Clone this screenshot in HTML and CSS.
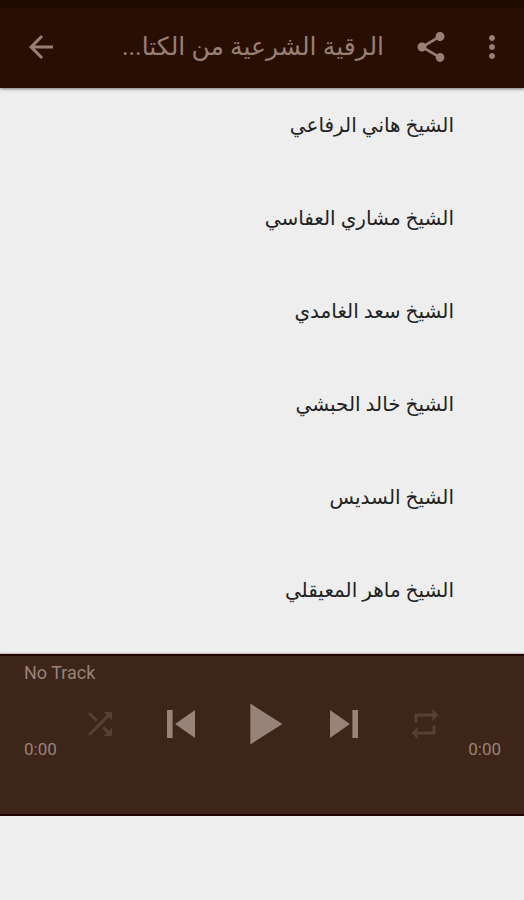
FILE: index.html
```html
<!DOCTYPE html>
<html lang="ar" dir="rtl">
<head>
<meta charset="UTF-8">
<meta name="viewport" content="width=device-width, initial-scale=1.0">
<title>الرقية الشرعية</title>
<link rel="stylesheet" href="styles.css">
</head>
<body>
<div class="status-bar"></div>
<header class="toolbar">
    <button class="icon-btn" aria-label="المزيد">
        <svg class="icon" viewBox="0 0 24 24"><path d="M12 8c1.1 0 2-.9 2-2s-.9-2-2-2-2 .9-2 2 .9 2 2 2zm0 2c-1.1 0-2 .9-2 2s.9 2 2 2 2-.9 2-2-.9-2-2-2zm0 6c-1.1 0-2 .9-2 2s.9 2 2 2 2-.9 2-2-.9-2-2-2z"/></svg>
    </button>
    <button class="icon-btn share" aria-label="مشاركة">
        <svg class="icon" viewBox="0 0 24 24"><path d="M18 16.08c-.76 0-1.44.3-1.96.77L8.91 12.7c.05-.23.09-.46.09-.7s-.04-.47-.09-.7l7.05-4.11c.54.5 1.25.81 2.04.81 1.66 0 3-1.34 3-3s-1.34-3-3-3-3 1.34-3 3c0 .24.04.47.09.7L8.04 9.81C7.5 9.31 6.79 9 6 9c-1.66 0-3 1.34-3 3s1.34 3 3 3c.79 0 1.5-.31 2.04-.81l7.12 4.16c-.05.21-.08.43-.08.65 0 1.61 1.31 2.92 2.92 2.92s2.92-1.31 2.92-2.92-1.31-2.92-2.92-2.92z"/></svg>
    </button>
    <h1 class="title">الرقية الشرعية من الكتا...</h1>
    <button class="icon-btn" aria-label="رجوع">
        <svg class="icon" viewBox="0 0 24 24"><path d="M20 11H7.83l5.59-5.59L12 4l-8 8 8 8 1.41-1.41L7.83 13H20v-2z"/></svg>
    </button>
</header>

<ul class="tracks">
    <li><a href="#">الشيخ هاني الرفاعي</a></li>
    <li><a href="#">الشيخ مشاري العفاسي</a></li>
    <li><a href="#">الشيخ سعد الغامدي</a></li>
    <li><a href="#">الشيخ خالد الحبشي</a></li>
    <li><a href="#">الشيخ السديس</a></li>
    <li><a href="#">الشيخ ماهر المعيقلي</a></li>
</ul>

<section class="player" dir="ltr">
    <div class="track-name">No Track</div>
    <div class="player-row">
        <span class="time">0:00</span>
        <div class="controls">
            <button class="icon-btn off" aria-label="Shuffle">
                <svg class="icon" viewBox="0 0 24 24"><path d="M10.59 9.17L5.41 4 4 5.41l5.17 5.17 1.42-1.41zM14.5 4l2.04 2.04L4 18.59 5.41 20 17.96 7.46 20 9.5V4h-5.5zm.33 9.41l-1.41 1.41 3.13 3.13L14.5 20H20v-5.5l-2.04 2.04-3.13-3.13z"/></svg>
            </button>
            <button class="icon-btn" aria-label="Previous">
                <svg class="icon skip" viewBox="0 0 24 24"><path d="M6 6h2.4v12H6zM9.5 12l8.5 6V6z"/></svg>
            </button>
            <button class="icon-btn" aria-label="Play">
                <svg class="icon play" viewBox="0 0 24 24"><path d="M8 5v14l11-7z"/></svg>
            </button>
            <button class="icon-btn" aria-label="Next">
                <svg class="icon skip" viewBox="0 0 24 24"><path d="M6 18l8.5-6L6 6v12zM15.6 6v12H18V6z"/></svg>
            </button>
            <button class="icon-btn off" aria-label="Repeat">
                <svg class="icon" viewBox="0 0 24 24"><path d="M7 7h10v3l4-4-4-4v3H5v6h2V7zm10 10H7v-3l-4 4 4 4v-3h12v-6h-2v4z"/></svg>
            </button>
        </div>
        <span class="time">0:00</span>
    </div>
</section>
</body>
</html>
```
FILE: styles.css
```css
body {
    margin: 0;
    background: #eee;
    font-family: Roboto, "DejaVu Sans", sans-serif;
}
.status-bar {
    height: 8px;
    background: #1e0c00;
}
.toolbar {
    display: flex;
    align-items: center;
    box-sizing: border-box;
    height: 80px;
    padding: 0 14px 2px 23px;
    background: #280f02;
    color: #988074;
    box-shadow: 0 1px 3px rgba(0, 0, 0, 0.5);
}
.icon-btn {
    display: flex;
    align-items: center;
    justify-content: center;
    flex: none;
    padding: 0;
    border: 0;
    background: none;
    color: inherit;
}
.icon {
    width: 36px;
    height: 36px;
    fill: currentColor;
}
.share {
    margin: 0 25px 0 29px;
}
.title {
    flex: 1;
    margin: 0;
    font-size: 25px;
    font-weight: normal;
    line-height: 32px;
    white-space: nowrap;
}
.tracks {
    margin: 0;
    padding: 0;
    list-style: none;
}
.tracks li {
    height: 93px;
}
.tracks li:last-child {
    height: 101px;
}
.tracks a {
    display: block;
    padding: 21px 70px 0 16px;
    color: #222;
    font-size: 20px;
    line-height: 32px;
    text-decoration: none;
}
.player {
    padding: 7px 23px 55px 24px;
    border-top: 2px solid #220500;
    border-bottom: 2px solid #220500;
    background: #3d2519;
    color: #988379;
    box-shadow: 0 0 2px rgba(0, 0, 0, 0.6);
}
.track-name {
    margin-bottom: 6px;
    font-size: 18px;
    line-height: 20px;
}
.player-row {
    display: flex;
    align-items: flex-end;
}
.time {
    font-size: 17px;
    line-height: 20px;
}
.controls {
    display: grid;
    grid-template-columns: repeat(5, 1fr);
    flex: 1;
    align-items: center;
    justify-items: center;
    padding: 0 3px;
}
.off {
    color: #554033;
}
.skip {
    width: 56px;
    height: 56px;
}
.play {
    width: 70px;
    height: 70px;
}
```
